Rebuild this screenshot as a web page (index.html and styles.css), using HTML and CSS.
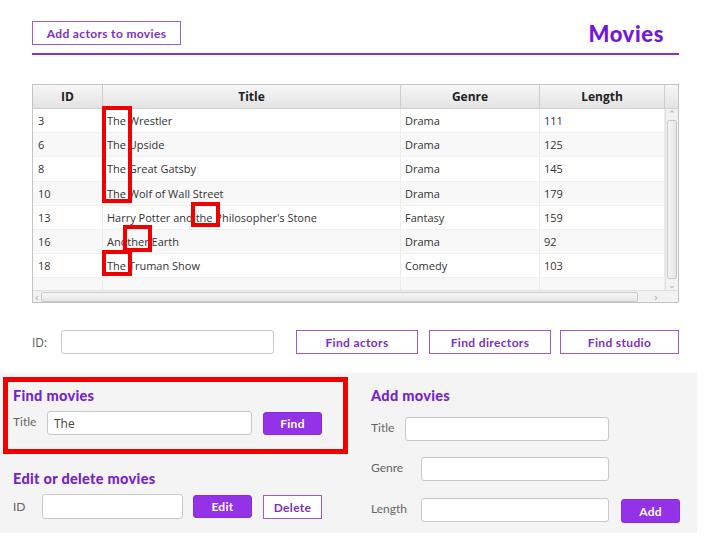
FILE: index.html
```html
<!DOCTYPE html>
<html>
<head>
<meta charset="utf-8">
<link rel="stylesheet" href="styles.css">
</head>
<body>
<div class="header">
  <button class="btn-outline btn-top">Add actors to movies</button>
  <h1 class="page-title">Movies</h1>
</div>

<div class="table-wrap">
  <div class="tbl">
    <div class="thead">
      <div class="th">ID</div>
      <div class="th">Title</div>
      <div class="th">Genre</div>
      <div class="th">Length</div>
      <div class="th th-end"></div>
    </div>
    <div class="tbody">
      <div class="rows">
        <div class="tr"><div class="td">3</div><div class="td">The Wrestler</div><div class="td">Drama</div><div class="td">111</div></div>
        <div class="tr alt"><div class="td">6</div><div class="td">The Upside</div><div class="td">Drama</div><div class="td">125</div></div>
        <div class="tr"><div class="td">8</div><div class="td">The Great Gatsby</div><div class="td">Drama</div><div class="td">145</div></div>
        <div class="tr alt"><div class="td">10</div><div class="td">The Wolf of Wall Street</div><div class="td">Drama</div><div class="td">179</div></div>
        <div class="tr"><div class="td">13</div><div class="td">Harry Potter and the Philosopher's Stone</div><div class="td">Fantasy</div><div class="td">159</div></div>
        <div class="tr alt"><div class="td">16</div><div class="td">Another Earth</div><div class="td">Drama</div><div class="td">92</div></div>
        <div class="tr"><div class="td">18</div><div class="td">The Truman Show</div><div class="td">Comedy</div><div class="td">103</div></div>
        <div class="tr alt"><div class="td"></div><div class="td"></div><div class="td"></div><div class="td"></div></div>
      </div>
      <div class="vscroll">
        <span class="arrow">&#8963;</span>
        <div class="vthumb"></div>
        <span class="arrow">&#8964;</span>
      </div>
    </div>
    <div class="hscroll">
      <span class="harrow">&lsaquo;</span>
      <div class="hthumb"></div>
      <span class="harrow harrow-r">&rsaquo;</span>
    </div>
  </div>
  <div class="mark mark1"></div>
  <div class="mark mark2"></div>
  <div class="mark mark3"></div>
  <div class="mark mark4"></div>
</div>

<div class="id-row">
  <label class="lbl-id">ID:</label>
  <input class="field field-id" type="text">
  <button class="btn-outline btn-find btn-fa">Find actors</button>
  <button class="btn-outline btn-find btn-fd">Find directors</button>
  <button class="btn-outline btn-find btn-fs">Find studio</button>
</div>

<div class="panel">
  <div class="col-left">
    <div class="highlight">
      <h2 class="sec-title">Find movies</h2>
      <div class="form-row">
        <span class="lbl lbl-title">Title</span>
        <input class="field field-find" type="text" value="The">
        <button class="btn-fill btn-small">Find</button>
      </div>
    </div>
    <div class="edit-sec">
      <h2 class="sec-title">Edit or delete movies</h2>
      <div class="form-row">
        <span class="lbl lbl-eid">ID</span>
        <input class="field field-eid" type="text">
        <button class="btn-fill btn-small">Edit</button>
        <button class="btn-outline btn-small btn-del">Delete</button>
      </div>
    </div>
  </div>
  <div class="col-right">
    <h2 class="sec-title">Add movies</h2>
    <div class="form-row row-t">
      <span class="lbl lbl-at">Title</span>
      <input class="field field-at" type="text">
    </div>
    <div class="form-row row-g">
      <span class="lbl lbl-ag">Genre</span>
      <input class="field field-ag" type="text">
    </div>
    <div class="form-row row-l">
      <span class="lbl lbl-ag">Length</span>
      <input class="field field-ag" type="text">
      <button class="btn-fill btn-small btn-add">Add</button>
    </div>
  </div>
</div>
</body>
</html>
```

FILE: styles.css
```css
* { box-sizing: border-box; }
body {
  margin: 0;
  width: 708px;
  height: 546px;
  background: #ffffff;
  font-family: "Lato", "DejaVu Sans", sans-serif;
  overflow: hidden;
}
button, input { font-family: inherit; margin: 0; }

.header {
  margin: 21px 0 0 32px;
  width: 647px;
  height: 34px;
  border-bottom: 2px solid #8a2ed6;
  display: flex;
  justify-content: space-between;
  align-items: flex-start;
}
.btn-outline {
  background: #ffffff;
  border: 1px solid #9a5ccf;
  color: #7b30c2;
  font-weight: bold;
  font-size: 12px;
  letter-spacing: 0.35px;
  padding: 0;
}
.btn-top {
  width: 149px;
  height: 24px;
}
.page-title {
  margin: 0 15px 0 0;
  font-size: 22px;
  line-height: 26px;
  letter-spacing: 0.6px;
  color: #7417d9;
  font-weight: 900;
}

.table-wrap {
  position: relative;
  margin: 29px 0 0 32px;
  width: 647px;
}
.tbl {
  border: 1px solid #c3c3c3;
  width: 647px;
  font-family: "Open Sans", "Noto Sans", sans-serif;
  font-size: 11px;
  color: #333;
}
.thead {
  display: grid;
  grid-template-columns: 70px 298px 139px 125px 13px;
  height: 24px;
  background: linear-gradient(#f7f7f7, #e3e3e3);
  border-bottom: 1px solid #d0d0d0;
}
.th {
  border-right: 1px solid #cdcdcd;
  display: flex;
  align-items: center;
  justify-content: center;
  font-weight: bold;
  font-size: 12px;
  color: #222;
}
.th-end { border-right: none; }
.tbody {
  display: flex;
  height: 181px;
}
.rows {
  width: 632px;
  overflow: hidden;
}
.tr {
  display: grid;
  grid-template-columns: 70px 298px 139px 125px;
  height: 24.2px;
  background: #ffffff;
  border-bottom: 1px solid #f0f0f0;
}
.tr.alt { background: #f8f8f8; }
.td {
  border-right: 1px solid #ececec;
  padding-left: 4px;
  display: flex;
  align-items: center;
  white-space: nowrap;
}
.td:first-child { padding-left: 5px; }
.vscroll {
  width: 13px;
  border-left: 1px solid #e0e0e0;
  background: #f2f2f2;
  display: flex;
  flex-direction: column;
  align-items: center;
}
.arrow {
  font-size: 9px;
  line-height: 10px;
  color: #aaa;
  height: 10px;
}
.vthumb {
  flex: 1;
  width: 10px;
  border: 1px solid #c9c9c9;
  border-radius: 2px;
  background: linear-gradient(90deg, #f4f4f4, #e6e6e6);
  margin: 1px 0;
}
.hscroll {
  height: 12px;
  background: #f2f2f2;
  border-top: 1px solid #e0e0e0;
  display: flex;
  align-items: center;
}
.harrow {
  font-size: 11px;
  line-height: 10px;
  color: #aaa;
  width: 8px;
  text-align: center;
}
.harrow-r { width: 36px; }
.hthumb {
  width: 597px;
  height: 10px;
  border: 1px solid #c9c9c9;
  border-radius: 2px;
  background: linear-gradient(#f6f6f6, #e6e6e6);
}

.mark {
  position: absolute;
  border: 4px solid #f00000;
}
.mark1 { left: 70px; top: 22px; width: 30px; height: 97px; }
.mark2 { left: 159px; top: 118px; width: 29px; height: 25px; }
.mark3 { left: 91px; top: 141px; width: 29px; height: 27px; }
.mark4 { left: 70px; top: 166px; width: 30px; height: 26px; }

.id-row {
  margin: 27px 0 0 32px;
  display: flex;
  align-items: center;
  height: 24px;
}
.lbl-id {
  font-family: "Open Sans", sans-serif;
  font-size: 12px;
  color: #555;
  width: 29px;
}
.field {
  height: 24px;
  border: 1px solid #c8c8c8;
  border-radius: 3px;
  background: #fff;
  padding: 0 6px;
  font-family: "Open Sans", sans-serif;
  font-size: 12px;
  color: #444;
}
.field-id { width: 213px; margin-right: 22px; }
.btn-find { height: 24px; }
.btn-fa { width: 122px; margin-right: 11px; }
.btn-fd { width: 122px; margin-right: 9px; }
.btn-fs { width: 119px; }

.panel {
  margin-top: 19px;
  width: 697px;
  height: 160px;
  background: #f4f4f4;
  display: flex;
}
.col-left { width: 371px; }
.highlight {
  margin: 4px 0 0 3px;
  width: 345px;
  height: 77px;
  border: 5px solid #f00000;
  padding: 5px 0 0 5px;
}
.sec-title {
  margin: 0;
  font-size: 14.5px;
  line-height: 18px;
  letter-spacing: 0.3px;
  color: #7523cc;
  font-weight: 900;
}
.form-row {
  display: flex;
  align-items: center;
}
.highlight .form-row { margin-top: 6px; }
.lbl {
  font-size: 12px;
  color: #666;
  margin-top: -3px;
}
.lbl-title { width: 34px; }
.field-find { width: 205px; margin-right: 11px; }
.btn-fill {
  background: #9332e6;
  border: 1px solid #8a2be0;
  border-radius: 3px;
  color: #fff;
  font-weight: bold;
  font-size: 12px;
  letter-spacing: 0.3px;
  padding: 0;
}
.btn-small { width: 59px; height: 23px; }
.edit-sec { padding: 16px 0 0 13px; }
.edit-sec .form-row { margin-top: 5px; height: 26px; }
.lbl-eid { width: 29px; margin-top: 0; }
.field-eid { width: 141px; height: 25px; margin-right: 10px; }
.btn-del { margin-left: 11px; height: 24px; margin-top: 2px; }

.col-right { padding-top: 14px; }
.row-t { margin-top: 12px; }
.row-g, .row-l { margin-top: 16px; }
.lbl-at { width: 34px; }
.lbl-ag { width: 50px; }
.field-at { width: 204px; }
.field-ag { width: 188px; }
.btn-add { margin-left: 12px; height: 24px; margin-top: 2px; }
```
